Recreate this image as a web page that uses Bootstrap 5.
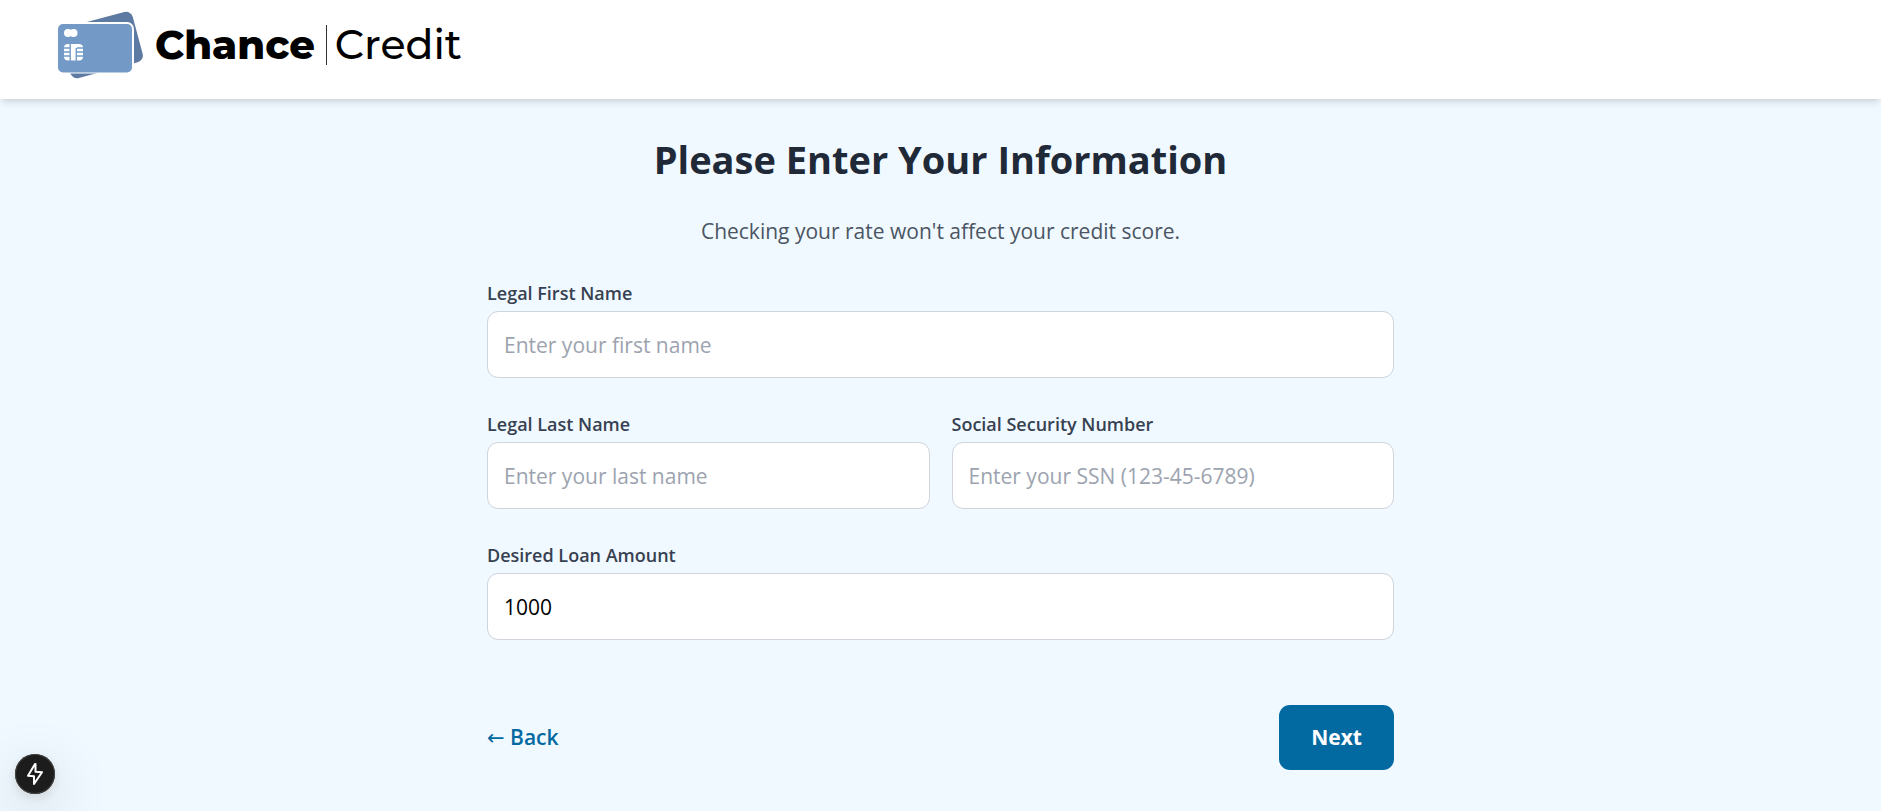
<!DOCTYPE html>
<html lang="en">
<head>
<meta charset="utf-8">
<meta name="viewport" content="width=device-width, initial-scale=1">
<title>Chance Credit</title>
<link href="https://cdn.jsdelivr.net/npm/bootstrap@5.3.0/dist/css/bootstrap.min.css" rel="stylesheet">
<style>
  body { background: #f0f9ff; font-family: "Segoe UI", "Open Sans", "Noto Sans", sans-serif; font-size: 21px; line-height: 32px; color: #1f2937; }
  .site-header { background: #fff; min-height: 99px; padding: 10px 58px 20px; box-shadow: 0 5px 8px -1px rgba(0,0,0,.1), 0 3px 5px -3px rgba(0,0,0,.1); }
  .brand-text { font-family: Montserrat, Inter, sans-serif; line-height: 69px; color: #000; }
  .brand-bold { font-size: 40px; font-weight: 800; margin-left: 10px; }
  .brand-light { font-size: 41px; font-weight: 500; }
  .brand-rule { width: 1px; height: 40px; background: #333; margin: 0 8px 0 11px; }
  .form-shell { max-width: 907px; padding-top: 36px; }
  h1 { font-size: 38px; line-height: 48px; font-weight: 700; margin-bottom: 32px; }
  .intro { color: #4b5563; margin-bottom: 32px; }
  .form-label { font-size: 18px; line-height: 28px; font-weight: 600; color: #374151; margin-bottom: 4px; }
  .form-control { height: 67px; padding: 0 16px; font-size: 21px; color: #000; border-color: #d1d5db; border-radius: 11px; }
  .form-control::placeholder { color: #9ca3af; }
  .fields { --bs-gutter-x: 22px; --bs-gutter-y: 32px; }
  .actions { margin-top: 65px; margin-bottom: 40px; }
  .back-link { color: #0369a1; font-weight: 600; }
  .back-arrow { font-family: "DejaVu Sans", sans-serif; font-size: 21px; font-weight: 400; }
  .btn-next { background: #0369a1; color: #fff; font-size: 21px; line-height: 33px; font-weight: 700; padding: 16px 32px; border-radius: 11px; border: 0; }
  .btn-next:hover { background: #075985; color: #fff; }
  .dev-badge { left: 15px; bottom: 17px; width: 40px; height: 40px; background: #1c1c1c; box-shadow: 0 0 0 1px #444 inset, 0 4px 12px rgba(0,0,0,.1), 0 16px 60px rgba(0,0,0,.2); }
</style>
</head>
<body>
<header class="site-header d-flex align-items-start">
  <a href="#" class="d-flex align-items-center text-decoration-none brand-text">
    <svg width="87" height="68" viewBox="0 0 87 68" aria-hidden="true">
      <rect x="6" y="8" width="75" height="52" rx="7" fill="#5d7aa3" transform="rotate(-15 43.500 34)"/>
      <rect x="-1" y="11" width="77" height="51.500" rx="7" fill="#fff"/>
      <rect x="0" y="13" width="74" height="48.500" rx="5" fill="#7399c6"/>
      <circle cx="10" cy="22" r="4" fill="#fff"/><circle cx="15.500" cy="22" r="4" fill="#fff"/>
      <rect x="6" y="33" width="19" height="16.500" rx="4" fill="#fff"/>
      <path d="M6 37h5.500M6 41h5.500M6 45h5.500M19 37h6M19 41h6M19 45h6M12.200 33v17M18.300 37v13" fill="none" stroke="#7399c6" stroke-width="1.400"/>
    </svg>
    <span class="brand-bold">Chance</span>
    <span class="brand-rule"></span>
    <span class="brand-light">Credit</span>
  </a>
</header>
<main class="container-fluid px-0 form-shell">
  <h1 class="text-center">Please Enter Your Information</h1>
  <p class="intro text-center">Checking your rate won't affect your credit score.</p>
  <form>
    <div class="row fields mt-0">
      <div class="col-12 mt-0">
        <label class="form-label d-block" for="first">Legal First Name</label>
        <input class="form-control" id="first" type="text" placeholder="Enter your first name">
      </div>
      <div class="col-12 col-md-6">
        <label class="form-label d-block" for="last">Legal Last Name</label>
        <input class="form-control" id="last" type="text" placeholder="Enter your last name">
      </div>
      <div class="col-12 col-md-6">
        <label class="form-label d-block" for="ssn">Social Security Number</label>
        <input class="form-control" id="ssn" type="text" placeholder="Enter your SSN (123-45-6789)">
      </div>
      <div class="col-12">
        <label class="form-label d-block" for="amount">Desired Loan Amount</label>
        <input class="form-control" id="amount" type="text" inputmode="numeric" value="1000">
      </div>
    </div>
    <div class="actions d-flex justify-content-between align-items-center">
      <a href="#" class="back-link text-decoration-none"><span class="back-arrow">←</span> Back</a>
      <button type="submit" class="btn btn-next">Next</button>
    </div>
  </form>
</main>
<button type="button" class="dev-badge position-fixed rounded-circle border-0 p-0 d-flex align-items-center justify-content-center" aria-label="Developer tools">
  <svg width="18" height="24" viewBox="0 0 18 24" fill="none" stroke="#fff" stroke-width="2" stroke-linejoin="round" aria-hidden="true">
    <path d="M9 2 2 13.800 8 14.300V22L16 10.200 9.500 9.700V2z"/>
  </svg>
</button>
<script src="https://cdn.jsdelivr.net/npm/bootstrap@5.3.0/dist/js/bootstrap.bundle.min.js"></script>
</body>
</html>
